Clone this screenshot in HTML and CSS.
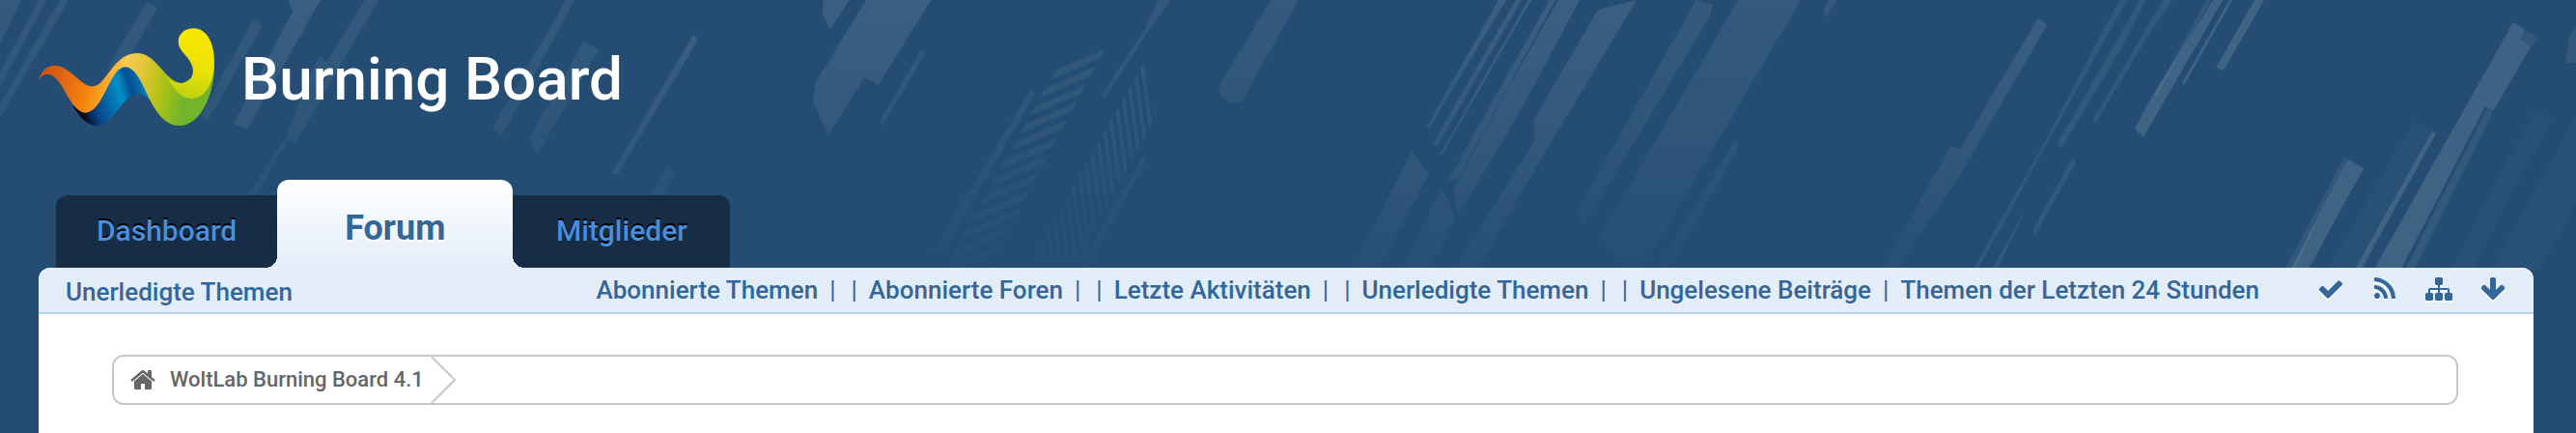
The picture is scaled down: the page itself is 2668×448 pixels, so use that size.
FILE: index.html
```html
<!DOCTYPE html>
<html lang="de">
<head>
    <meta charset="UTF-8">
    <meta name="viewport" content="width=device-width, initial-scale=1.0">
    <title>Forum - Burning Board</title>
    <link rel="stylesheet" href="styles.css">
</head>
<body>
    <svg class="rays" viewBox="0 0 2668 280" aria-hidden="true">
        <defs>
            <linearGradient id="fade" x1="0" y1="0" x2="0" y2="1">
                <stop offset="0" stop-color="#fff"/>
                <stop offset="0.4" stop-color="#bbb"/>
                <stop offset="1" stop-color="#222"/>
            </linearGradient>
            <mask id="fadeDown" maskUnits="userSpaceOnUse" x="0" y="0" width="2668" height="280">
                <rect width="2668" height="280" fill="url(#fade)"/>
            </mask>
            <pattern id="slats" width="14" height="13" patternUnits="userSpaceOnUse" patternTransform="rotate(-23)">
                <rect width="14" height="7" fill="#fff"/>
            </pattern>
            <pattern id="bars" width="8" height="8" patternUnits="userSpaceOnUse" patternTransform="rotate(-8)">
                <rect width="4" height="8" fill="#fff"/>
            </pattern>
        </defs>
        <g fill="#fff" mask="url(#fadeDown)">
            <g opacity="0.07">
                <polygon points="0,0 22,0 0,45"/>
                <polygon points="40,0 48,0 0,90 0,75"/>
                <polygon points="62,0 71,0 0,122 0,108"/>
                <polygon points="152,2 163,8 125,76 112,70"/>
                <polygon points="262,20 271,27 215,125 208,120"/>
                <polygon points="378,0 392,0 335,98 306,148 298,145 225,275 210,272 296,142 325,68 332,58 338,64"/>
                <polygon points="586,0 595,0 520,140 510,133"/>
                <polygon points="605,42 620,52 555,162 549,142"/>
                <polygon points="692,170 700,178 650,275 630,275"/>
                <polygon points="1068,92 1072,97 975,265 965,262"/>
                <polygon points="1185,160 1188,165 1128,275 1118,275"/>
                <polygon points="1199,0 1212,0 1188,34 1145,100 1141,98 1184,33"/>
                <polygon points="1316,0 1345,0 1286,105 1275,107 1264,98 1263,88"/>
                <polygon points="1757,0 1774,5 1770,18 1640,235 1632,220"/>
                <polygon points="1800,0 1865,0 1700,280 1685,278 1655,248"/>
                <polygon points="1798,143 1800,155 1730,275 1718,275"/>
                <polygon points="1893,0 1902,0 1892,18 1888,14"/>
                <polygon points="954,51 958,56 914,130 911,126"/>
                <polygon fill="url(#slats)" points="1148,44 1097,66 980,275 1025,275"/>
                <polygon fill="url(#bars)" points="1185,65 1198,120 1110,275 1065,275"/>
            </g>
            <g opacity="0.1">
                <polygon points="298,0 332,0 256,134 242,128 303,12"/>
                <polygon points="718,36 723,41 640,180 633,180"/>
                <polygon points="853,0 880,0 860,30 852,15"/>
                <polygon points="897,0 964,0 910,88 895,80 858,140 842,105 845,85"/>
                <polygon points="1552,0 1560,0 1481,132 1477,132"/>
                <polygon points="1570,0 1576,0 1488,152 1484,148"/>
                <polygon points="1583,0 1586,0 1494,160 1491,160"/>
                <polygon points="1605,0 1611,0 1510,185 1500,186"/>
                <polygon points="1614,0 1636,0 1588,90 1560,140 1510,223 1506,195 1560,95"/>
                <polygon points="1655,10 1695,0 1575,200 1530,280 1505,280 1590,145 1588,125"/>
                <polygon points="1462,157 1480,180 1427,280 1400,280"/>
                <polygon points="1493,195 1508,225 1480,280 1450,280"/>
                <polygon points="2111,19 2120,26 2028,185 1965,278 1950,276 2020,152 2030,154"/>
            </g>
        </g>
        <g fill="#fff" opacity="0.06">
            <polygon points="2195,0 2203,0 2119,150 2048,280 2043,280 2116,150"/>
            <polygon points="2216,0 2222,0 2197,50 2135,153 2130,150 2190,46"/>
            <polygon points="2240,0 2250,0 2223,40 2170,128 2167,125"/>
            <polygon points="2147,163 2150,168 2108,243 2105,238"/>
            <polygon points="2099,215 2068,280 2062,280"/>
            <polygon points="2285,0 2290,0 2234,98 2231,98"/>
            <polygon points="2428,163 2432,165 2375,280 2366,280"/>
            <polygon points="2576,112 2582,116 2500,280 2490,280"/>
            <polygon points="2615,32 2628,38 2622,48 2611,44"/>
            <polygon points="2660,40 2668,27 2668,65 2658,65"/>
        </g>
        <g fill="#fff" opacity="0.015">
            <polygon points="2500,125 2520,136 2440,280 2410,280"/>
            <polygon points="2625,113 2643,123 2560,280 2538,280"/>
            <polygon points="2668,120 2668,210 2630,280 2580,280"/>
        </g>
        <g fill="#fff" opacity="0.12">
            <polygon points="2292,0 2302,0 2220,142 2211,133 2230,98"/>
            <polygon points="2309,0 2312,0 2262,88 2260,86"/>
            <polygon points="2335,0 2345,0 2303,73 2295,70"/>
            <polygon points="2432,165 2448,174 2390,280 2372,280"/>
            <polygon points="2519,136 2523,138 2445,280 2438,280"/>
            <polygon points="2603,23 2615,31 2611,42 2621,49 2582,115 2574,110 2486,280 2458,280"/>
        </g>
    </svg>

    <header class="header">
        <a href="#" class="logo">
            <svg class="logo-mark" viewBox="30 27 546 306" aria-hidden="true">
                <defs>
                    <linearGradient id="ribbon" gradientUnits="userSpaceOnUse" x1="60" y1="150" x2="520" y2="240">
                        <stop offset="0" stop-color="#d35316"/>
                        <stop offset="0.28" stop-color="#f5850d"/>
                        <stop offset="0.4" stop-color="#fba92c"/>
                        <stop offset="0.5" stop-color="#f9cc55"/>
                        <stop offset="0.62" stop-color="#e2c636"/>
                        <stop offset="0.76" stop-color="#b2c315"/>
                        <stop offset="0.92" stop-color="#72b52b"/>
                    </linearGradient>
                    <linearGradient id="back" gradientUnits="userSpaceOnUse" x1="160" y1="290" x2="400" y2="220">
                        <stop offset="0" stop-color="#050510"/>
                        <stop offset="0.2" stop-color="#0a4387"/>
                        <stop offset="0.55" stop-color="#028fc9"/>
                        <stop offset="0.68" stop-color="#04508f"/>
                        <stop offset="1" stop-color="#0c9bd8"/>
                    </linearGradient>
                    <linearGradient id="hook" gradientUnits="userSpaceOnUse" x1="530" y1="70" x2="490" y2="245">
                        <stop offset="0" stop-color="#f6e600"/>
                        <stop offset="0.5" stop-color="#e9e207"/>
                        <stop offset="1" stop-color="#bdd011"/>
                    </linearGradient>
                </defs>
                <path fill="url(#back)" d="M135 268C158 302 178 330 212 330C262 330 292 232 340 232C376 232 396 288 428 316L372 190C345 152 322 146 300 147C250 150 230 275 176 286Z"/>
                <path fill="url(#ribbon)" d="M30 187C40 155 60 143 80 143C125 143 160 208 198 208C240 208 262 105 335 105C400 105 420 196 478 198L576 140C576 240 530 330 468 330C400 330 372 235 345 188C330 162 316 148 298 148C250 150 232 290 175 290C125 288 105 170 57 170C45 170 37 177 30 187Z"/>
                <path fill="url(#hook)" d="M430 180C448 194 462 199 475 198C506 196 516 166 506 142C496 112 464 100 464 68C464 46 484 28 512 28C552 28 576 74 576 130C576 192 552 245 505 246C470 246 448 214 430 180Z"/>
            </svg>
            <span>Burning Board</span>
        </a>

        <nav class="main-menu">
            <a href="#" class="tab">Dashboard</a>
            <a href="#" class="tab active">Forum</a>
            <a href="#" class="tab">Mitglieder</a>
        </nav>
    </header>

    <main class="content">
        <div class="sub-menu">
            <a href="#" class="todo">Unerledigte Themen</a>
            <ul class="links">
                <li><a href="#">Abonnierte Themen</a></li>
                <li><i>|</i><i>|</i></li>
                <li><a href="#">Abonnierte Foren</a></li>
                <li><i>|</i><i>|</i></li>
                <li><a href="#">Letzte Aktivitäten</a></li>
                <li><i>|</i><i>|</i></li>
                <li><a href="#">Unerledigte Themen</a></li>
                <li><i>|</i><i>|</i></li>
                <li><a href="#">Ungelesene Beiträge</a></li>
                <li><i>|</i></li>
                <li><a href="#">Themen der Letzten 24 Stunden</a></li>
            </ul>
            <div class="tools">
                <button type="button" aria-label="Alles als gelesen markieren">
                    <svg viewBox="0 0 1792 1792"><path d="M1671 566q0 40-28 68l-724 724-136 136q-28 28-68 28t-68-28l-136-136-362-362q-28-28-28-68t28-68l136-136q28-28 68-28t68 28l294 295 656-657q28-28 68-28t68 28l136 136q28 28 28 68z"/></svg>
                </button>
                <button type="button" aria-label="RSS-Feed">
                    <svg viewBox="0 0 1792 1792"><path d="M576 1344q0 80-56 136t-136 56-136-56-56-136 56-136 136-56 136 56 56 136zm512 123q2 28-17 48-18 21-47 21h-135q-25 0-43-16.5t-20-41.5q-22-229-184.5-391.5t-391.5-184.5q-25-2-41.5-20t-16.5-43v-135q0-29 21-47 17-17 43-17h5q160 13 306 80.5t259 181.5q114 113 181.5 259t80.5 306zm512 2q2 27-18 47-18 20-46 20h-143q-26 0-44.5-17.5t-19.5-42.5q-12-215-101-408.5t-231.5-336-336-231.5-408.5-102q-25-1-42.5-19.5t-17.5-43.5v-143q0-28 20-46 18-18 44-18h3q262 13 501.5 120t425.5 294q187 186 294 425.5t120 501.5z"/></svg>
                </button>
                <button type="button" aria-label="Schnellnavigation">
                    <svg viewBox="0 0 1792 1792"><path d="M1792 1248v320q0 40-28 68t-68 28h-320q-40 0-68-28t-28-68v-320q0-40 28-68t68-28h96v-192h-512v192h96q40 0 68 28t28 68v320q0 40-28 68t-68 28h-320q-40 0-68-28t-28-68v-320q0-40 28-68t68-28h96v-192h-512v192h96q40 0 68 28t28 68v320q0 40-28 68t-68 28h-320q-40 0-68-28t-28-68v-320q0-40 28-68t68-28h96v-192q0-52 38-90t90-38h512v-192h-96q-40 0-68-28t-28-68v-320q0-40 28-68t68-28h320q40 0 68 28t28 68v320q0 40-28 68t-68 28h-96v192h512q52 0 90 38t38 90v192h96q40 0 68 28t28 68z"/></svg>
                </button>
                <button type="button" aria-label="Zum Seitenende">
                    <svg viewBox="0 0 1792 1792"><path d="M1675 832q0 53-37 90l-651 652q-39 37-91 37-53 0-90-37l-651-652q-38-36-38-90 0-53 38-91l74-75q39-37 91-37 53 0 90 37l294 294v-704q0-52 38-90t90-38h128q52 0 90 38t38 90v704l294-294q37-37 90-37 52 0 91 37l75 75q37 39 37 91z"/></svg>
                </button>
            </div>
        </div>

        <nav class="breadcrumb" aria-label="Breadcrumb">
            <a href="#">
                <svg class="home" viewBox="0 0 1792 1792" aria-hidden="true"><path d="M1472 992v480q0 26-19 45t-45 19h-384v-384h-256v384h-384q-26 0-45-19t-19-45v-480q0-1 .5-3t.5-3l575-474 575 474q1 2 1 6zm223-69l-62 74q-8 9-21 11h-3q-13 0-21-7l-692-577-692 577q-12 8-24 7-13-2-21-11l-62-74q-8-10-7-23.5t11-21.5l719-599q32-26 76-26t76 26l244 204v-195q0-14 9-23t23-9h192q14 0 23 9t9 23v408l219 182q10 8 11 21.5t-7 23.5z"/></svg>
                <span>WoltLab Burning Board 4.1</span>
            </a>
            <svg class="pointer" viewBox="0 0 25 48" aria-hidden="true"><path d="M0 0L24 24L0 48"/></svg>
        </nav>
    </main>
</body>
</html>
```
FILE: styles.css
```css
* {
    margin: 0;
    padding: 0;
    box-sizing: border-box;
}

body {
    background: #254d73;
    font-family: 'Trebuchet MS', Roboto, sans-serif;
    font-size: 26px;
    font-weight: 500;
    color: #336699;
    display: flex;
    flex-direction: column;
    min-height: 100vh;
    padding: 0 44px 0 40px;
    position: relative;
}

a {
    color: inherit;
    text-decoration: none;
}

/* light streaks behind the header */
.rays {
    position: absolute;
    top: 0;
    left: 0;
    width: 100%;
    z-index: -1;
}

.header {
    padding-top: 29px;
}

.logo {
    display: flex;
    align-items: center;
    gap: 28px;
    width: fit-content;
    height: 102px;
    color: #fff;
    font-size: 62px;
    line-height: 68px;
}

.logo span {
    padding-top: 4px;
}

.logo-mark {
    width: 182px;
    height: 102px;
}

.main-menu {
    display: flex;
    align-items: flex-end;
    margin-top: 55px;
    padding-left: 18px;
}

.tab {
    height: 75px;
    min-width: 225px;
    padding: 0 42px;
    line-height: 74px;
    font-size: 30px;
    text-align: center;
    color: #4a8fdc;
    background: #172d45;
    text-shadow: 0 -2px 0 #000;
}

.tab:first-child {
    border-top-left-radius: 12px;
}

.tab:last-child {
    border-top-right-radius: 12px;
}

.tab:hover {
    color: #7ab2ee;
}

.tab.active {
    position: relative;
    height: 91px;
    padding: 0 70px;
    line-height: 100px;
    font-size: 36px;
    font-weight: 700;
    color: #336699;
    background: linear-gradient(#fff, #e3edf8);
    border-radius: 12px 12px 0 0;
    text-shadow: 0 2px 0 #fff;
}

/* rounded feet of the active tab */
.tab.active::before,
.tab.active::after {
    content: "";
    position: absolute;
    bottom: 0;
    width: 12px;
    height: 12px;
}

.tab.active::before {
    right: 100%;
    background: radial-gradient(circle at 0 0, transparent 12px, #e3edf8 12px);
}

.tab.active::after {
    left: 100%;
    background: radial-gradient(circle at 100% 0, transparent 12px, #e3edf8 12px);
}

.content {
    flex: 1;
    background: #fff;
    border-radius: 12px 12px 0 0;
}

.sub-menu {
    display: flex;
    height: 48px;
    padding: 0 28px;
    line-height: 46px;
    background: #e3edf8;
    border-bottom: 2px solid #b6d3f0;
    border-radius: 12px 12px 0 0;
}

.todo {
    line-height: 50px;
}

.links {
    display: flex;
    gap: 4px;
    margin-left: auto;
    list-style: none;
}

.links i {
    font-style: normal;
    font-weight: 400;
    padding: 0 8px;
}

.tools {
    display: flex;
    gap: 28px;
    margin-left: 60px;
}

.tools button {
    display: flex;
    align-items: center;
    width: 28px;
    height: 44px;
    border: 0;
    background: none;
    cursor: pointer;
}

.tools svg {
    width: 28px;
    height: 28px;
    fill: #336699;
    filter: drop-shadow(0 2px 0 #fff);
}

.breadcrumb {
    display: flex;
    height: 52px;
    margin: 42px 78px 0 76px;
    border: 2px solid #c8c8c8;
    border-radius: 12px;
    color: #666;
    font-size: 22px;
    line-height: 48px;
}

.breadcrumb a {
    display: flex;
    align-items: center;
    gap: 14px;
    padding: 0 8px 0 16px;
}

.home {
    width: 28px;
    height: 28px;
    fill: #666;
}

.pointer {
    width: 25px;
    height: 48px;
    fill: none;
    stroke: #c8c8c8;
    stroke-width: 2;
}
```
